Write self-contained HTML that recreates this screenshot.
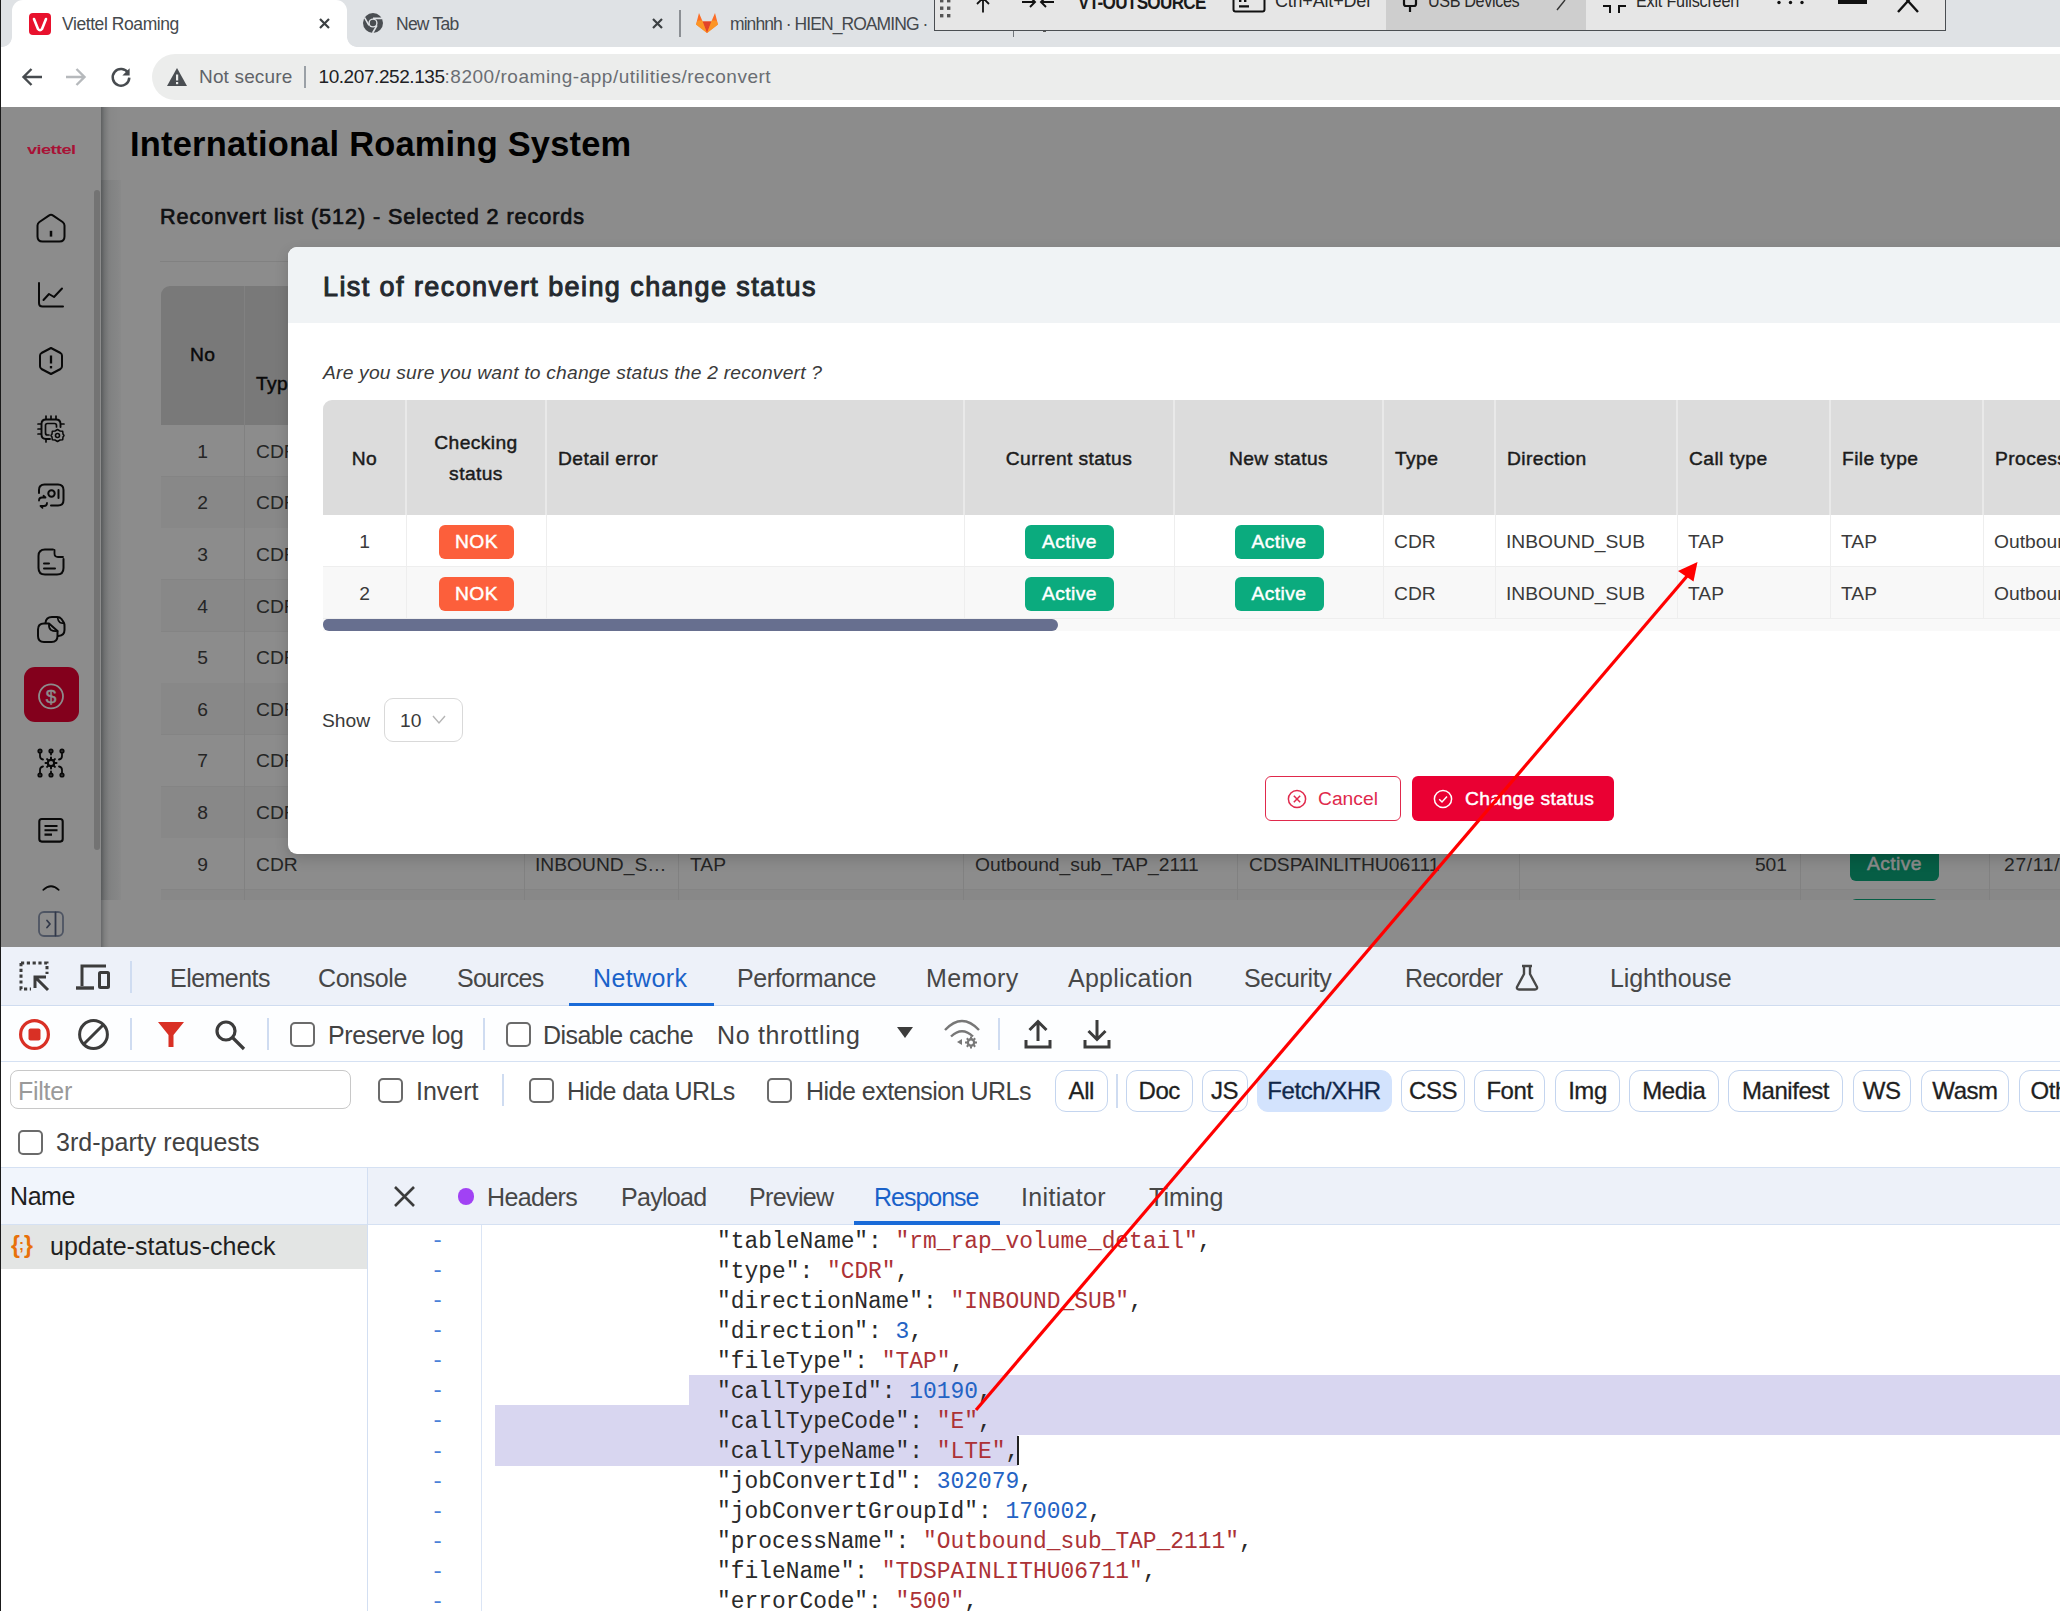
<!DOCTYPE html>
<html lang="en">
<head>
<meta charset="utf-8">
<title>Viettel Roaming</title>
<style>
*{box-sizing:border-box;margin:0;padding:0}
html,body{width:2060px;height:1611px;overflow:hidden;background:#fff}
body{position:relative;font-family:"Liberation Sans",sans-serif;color:#222}
.abs{position:absolute}
.t{position:absolute;white-space:nowrap;line-height:1}
/* ---------- browser chrome ---------- */
#tabstrip{left:0;top:0;width:2060px;height:47px;background:#dfe2e5}
#tab1{left:12px;top:0;width:335px;height:47px;background:#fff;border-radius:11px 11px 0 0}
#toolbar{left:0;top:47px;width:2060px;height:59px;background:#fff}
#omni{left:152px;top:53.5px;width:1960px;height:46.5px;background:#ecedec;border-radius:23px}
.ui{font-family:"Liberation Sans",sans-serif;color:#3f4347}
#leftedge{left:0;top:0;width:1px;height:1611px;background:#1a1a1a}
/* ---------- overlay bar ---------- */
#vbar{left:933.5px;top:-2px;width:1012.5px;height:32.6px;background:#e6e6e6;border:1.2px solid #4a4e52}
/* ---------- app ---------- */
#app{left:0;top:105px;width:2060px;height:842px;background:#fff;overflow:hidden}

/* app */
.m{-webkit-text-stroke:0.45px currentColor;letter-spacing:.4px}
#side{left:0;top:0;width:101px;height:842px;background:#fff}
#mask{left:0;top:0;width:2060px;height:842px;background:rgba(0,0,0,.45)}
.bt{font-size:19.25px;color:#444}
.bgrow{left:161px;width:1900px;height:52px}
.vline{width:1px;background:#ebebeb}
#modal{left:288px;top:142px;width:1800px;height:607px;background:#fff;border-radius:9px;overflow:hidden;box-shadow:0 5px 14px rgba(0,0,0,.16)}
#mhead{left:0;top:0;width:1800px;height:76px;background:#f0f3f5}
.th{position:absolute;top:0;height:115px;background:#dcdcdc;padding-top:1px;font-size:19.25px;color:#1b1b1b;display:flex;align-items:center;line-height:31px}
.td{position:absolute;height:52px;border-bottom:1px solid #eee;font-size:19.25px;color:#3a3a3a;display:flex;align-items:center;padding-left:11px;padding-top:2px;white-space:nowrap}
.badge{position:absolute;height:34px;border-radius:6px;color:#fff;font-size:19.25px;display:flex;align-items:center;justify-content:center}
.ok{background:#0bab7e;width:89px}
.nok{background:#fc5f3b;width:75px}
/* ---------- devtools ---------- */
#dt{left:0;top:947px;width:2060px;height:664px;background:#fff;overflow:hidden}

.dt{font-size:25px;color:#424242;letter-spacing:-0.2px;margin-top:.8px}
.cb{position:absolute;width:25px;height:25px;border:2px solid #6b6b6b;border-radius:5px;background:#fff}
.sep{position:absolute;width:2px;background:#cfdcf1}
.pill{position:absolute;top:123px;height:42px;border:1.5px solid #c4d5ef;border-radius:11px;font-size:24px;color:#1f1f1f;display:flex;align-items:center;justify-content:center;letter-spacing:-0.45px;-webkit-text-stroke:.3px #1f1f1f;background:#fff}
.code{position:absolute;left:717px;font-family:"Liberation Mono",monospace;font-size:22.9px;line-height:30px;white-space:pre;color:#2a2a2a;transform:scaleY(1.06);transform-origin:0 50%;margin-top:1.5px}
.s{color:#ac3236}.n{color:#2463c4}
.dash{position:absolute;left:431px;font-family:"Liberation Mono",monospace;font-size:22px;color:#4a80d8;line-height:30px;margin-top:2px}
</style>
</head>
<body>
<!-- browser chrome -->
<div id="tabstrip" class="abs"></div>
<div id="tab1" class="abs"></div>
<div id="toolbar" class="abs"></div>
<div id="omni" class="abs"></div>

<div class="abs" style="left:347px;top:37px;width:10px;height:10px;background:radial-gradient(circle at 100% 0,#dfe2e5 9.5px,#fff 10.2px)"></div>
<div class="abs" style="left:2px;top:37px;width:10px;height:10px;background:radial-gradient(circle at 0 0,#dfe2e5 9.5px,#fff 10.2px)"></div>
<!-- tab 1 -->
<div class="abs" style="left:29px;top:13px;width:22px;height:22px;background:#e8112d;border-radius:4px"></div>
<svg class="abs" style="left:29px;top:13px" width="22" height="22" viewBox="0 0 22 22"><path d="M5 6 L9 16 Q11 18.5 13 16 L17 6" fill="none" stroke="#fff" stroke-width="2.6" stroke-linecap="round" stroke-linejoin="round"/></svg>
<div id="ct1" class="t ui" style="left:62px;top:15.5px;font-size:17.5px;letter-spacing:-0.42px;color:#45494d">Viettel Roaming</div>
<svg class="abs" style="left:318px;top:17px" width="13" height="13" viewBox="0 0 13 13"><path d="M2 2 L11 11 M11 2 L2 11" stroke="#3c4043" stroke-width="2.2" fill="none"/></svg>
<!-- tab 2 -->
<svg class="abs" style="left:362px;top:12px" width="22" height="22" viewBox="0 0 22 22"><circle cx="11" cy="11" r="10" fill="#4a4e52"/><circle cx="11" cy="11" r="4.6" fill="#dfe2e5"/><circle cx="11" cy="11" r="3.2" fill="#4a4e52"/><path d="M11 6.4 H20 M7 13.3 L2.6 5.6 M15 13.3 L10.6 21" stroke="#dfe2e5" stroke-width="1.6"/></svg>
<div id="ct2" class="t ui" style="left:396px;top:15.5px;font-size:17.5px;letter-spacing:-0.75px;color:#45494d">New Tab</div>
<svg class="abs" style="left:651px;top:17px" width="13" height="13" viewBox="0 0 13 13"><path d="M2 2 L11 11 M11 2 L2 11" stroke="#3c4043" stroke-width="2.2" fill="none"/></svg>
<div class="abs" style="left:679px;top:10px;width:2px;height:27px;background:#8b8f94"></div>
<!-- tab 3 -->
<svg class="abs" style="left:695px;top:11px" width="24" height="23" viewBox="0 0 24 23"><path d="M12 22 L1 13.5 L4 2 L7.6 10.5 H16.4 L20 2 L23 13.5 Z" fill="#fc6d26"/><path d="M12 22 L7.6 10.5 H16.4 Z" fill="#e24329"/><path d="M12 22 L1 13.5 L2.6 9.5 H7.3 Z M12 22 L23 13.5 L21.4 9.5 H16.7 Z" fill="#fca326" opacity=".75"/></svg>
<div id="ct3" class="t ui" style="left:730px;top:15.5px;font-size:17.5px;letter-spacing:-0.93px;color:#45494d">minhnh · HIEN_ROAMING ·</div>
<div class="abs" style="left:1013px;top:30px;width:1px;height:7px;background:#70757a"></div>
<div class="abs" style="left:1043px;top:30px;width:3px;height:2px;background:#555"></div>
<!-- toolbar icons -->
<svg class="abs" style="left:20px;top:66px" width="24" height="22" viewBox="0 0 24 22"><path d="M22 11 H4 M11.5 3 L3.5 11 L11.5 19" fill="none" stroke="#474b4f" stroke-width="2.4"/></svg>
<svg class="abs" style="left:64px;top:66px" width="24" height="22" viewBox="0 0 24 22"><path d="M2 11 H20 M12.5 3 L20.5 11 L12.5 19" fill="none" stroke="#b6b9bc" stroke-width="2.4"/></svg>
<svg class="abs" style="left:109px;top:65px" width="24" height="24" viewBox="0 0 24 24"><path d="M19.2 8.2 A8.3 8.3 0 1 0 20.3 12.6" fill="none" stroke="#474b4f" stroke-width="2.5"/><path d="M20.6 3.2 V10.4 H13.4 Z" fill="#474b4f"/></svg>
<svg class="abs" style="left:166px;top:67px" width="22" height="20" viewBox="0 0 22 20"><path d="M11 1 L21 19 H1 Z" fill="#4a4e52"/><rect x="10" y="7.5" width="2.2" height="6" fill="#ecedec"/><rect x="10" y="15" width="2.2" height="2.2" fill="#ecedec"/></svg>
<div id="ns" class="t ui" style="left:199px;top:67px;font-size:19px;letter-spacing:0.16px;color:#5f6368">Not secure</div>
<div class="abs" style="left:304px;top:66px;width:2px;height:22px;background:#9aa0a6"></div>
<div id="url" class="t ui" style="left:318.5px;top:67px;font-size:19px;color:#202124"><span id="urlh" style="letter-spacing:-0.43px">10.207.252.135</span><span id="urlp" style="color:#6a6e73;letter-spacing:0.52px">:8200/roaming-app/utilities/reconvert</span></div>

<!-- app -->
<div id="app" class="abs">
<div id="side" class="abs"></div>
<div class="abs" style="left:94px;top:85px;width:6px;height:660px;background:#d2d2d2;border-radius:3px"></div>
<div class="abs" style="left:101px;top:0;width:8px;height:842px;background:linear-gradient(90deg,rgba(30,40,45,.30),rgba(30,40,45,.10) 45%,rgba(0,0,0,0) 100%)"></div><div class="abs" style="left:101px;top:0;width:20px;height:795px;background:linear-gradient(90deg,rgba(40,50,55,.10),rgba(40,50,55,.03) 50%,rgba(0,0,0,0) 100%)"></div>
<div class="abs" style="left:101px;top:75px;width:20px;height:720px;background:linear-gradient(90deg,rgba(60,75,80,.10),rgba(60,75,80,.03))"></div>
<div class="t" style="left:130px;top:21.8px;font-size:34.4px;font-weight:bold;color:#000;letter-spacing:0.23px" id="ttl">International Roaming System</div>
<div class="t m" style="left:160px;top:101px;font-size:21.6px;color:#1c2024;-webkit-text-stroke:0.7px #1c2024;letter-spacing:0.94px" id="sub">Reconvert list (512) - Selected 2 records</div>
<div class="abs" style="left:160px;top:156px;width:1900px;height:1px;background:#ececec"></div>
<div class="abs" style="left:161px;top:181px;width:1900px;height:139px;background:#dcdcdc;border-radius:9px 0 0 0"></div>
<div class="t m" style="left:190px;top:240px;font-size:19.25px;color:#111">No</div>
<div class="t m" style="left:256px;top:269px;font-size:19.25px;color:#111">Type</div>
<div class="abs bgrow" style="top:320.0px;background:#fff;border-bottom:1px solid #f0f0f0"></div>
<div class="t bt" style="left:161px;width:83px;text-align:center;top:336.5px">1</div>
<div class="t bt" style="left:256px;top:336.5px">CDR</div>
<div class="abs bgrow" style="top:371.6px;background:#f8f8f8;border-bottom:1px solid #f0f0f0"></div>
<div class="t bt" style="left:161px;width:83px;text-align:center;top:388.1px">2</div>
<div class="t bt" style="left:256px;top:388.1px">CDR</div>
<div class="abs bgrow" style="top:423.3px;background:#fff;border-bottom:1px solid #f0f0f0"></div>
<div class="t bt" style="left:161px;width:83px;text-align:center;top:439.8px">3</div>
<div class="t bt" style="left:256px;top:439.8px">CDR</div>
<div class="abs bgrow" style="top:475.0px;background:#f8f8f8;border-bottom:1px solid #f0f0f0"></div>
<div class="t bt" style="left:161px;width:83px;text-align:center;top:491.5px">4</div>
<div class="t bt" style="left:256px;top:491.5px">CDR</div>
<div class="abs bgrow" style="top:526.6px;background:#fff;border-bottom:1px solid #f0f0f0"></div>
<div class="t bt" style="left:161px;width:83px;text-align:center;top:543.1px">5</div>
<div class="t bt" style="left:256px;top:543.1px">CDR</div>
<div class="abs bgrow" style="top:578.2px;background:#f8f8f8;border-bottom:1px solid #f0f0f0"></div>
<div class="t bt" style="left:161px;width:83px;text-align:center;top:594.8px">6</div>
<div class="t bt" style="left:256px;top:594.8px">CDR</div>
<div class="abs bgrow" style="top:629.9px;background:#fff;border-bottom:1px solid #f0f0f0"></div>
<div class="t bt" style="left:161px;width:83px;text-align:center;top:646.4px">7</div>
<div class="t bt" style="left:256px;top:646.4px">CDR</div>
<div class="abs bgrow" style="top:681.5px;background:#f8f8f8;border-bottom:1px solid #f0f0f0"></div>
<div class="t bt" style="left:161px;width:83px;text-align:center;top:698.0px">8</div>
<div class="t bt" style="left:256px;top:698.0px">CDR</div>
<div class="abs bgrow" style="top:733.2px;background:#fff;border-bottom:1px solid #f0f0f0"></div>
<div class="t bt" style="left:161px;width:83px;text-align:center;top:749.7px">9</div>
<div class="t bt" style="left:256px;top:749.7px">CDR</div>
<div class="abs bgrow" style="top:784.8px;background:#f8f8f8;border-bottom:1px solid #f0f0f0"></div>
<div class="t bt" style="left:535px;top:749.7px">INBOUND_S…</div>
<div class="t bt" style="left:690px;top:749.7px">TAP</div>
<div class="t bt" style="left:975px;top:749.7px">Outbound_sub_TAP_2111</div>
<div class="t bt" style="left:1249px;top:749.7px">CDSPAINLITHU06111</div>
<div class="t bt" style="left:1687px;width:100px;text-align:right;top:749.7px">501</div>
<div class="t bt" style="left:2004px;top:749.7px;letter-spacing:.7px">27/11/2024</div>
<div class="badge ok m" style="left:1850px;top:742px">Active</div>
<div class="badge ok m" style="left:1850px;top:793.5px">Active</div>
<div class="abs vline" style="left:244px;top:181px;height:614px"></div>
<div class="abs vline" style="left:524px;top:181px;height:614px"></div>
<div class="abs vline" style="left:678px;top:181px;height:614px"></div>
<div class="abs vline" style="left:963px;top:181px;height:614px"></div>
<div class="abs vline" style="left:1237px;top:181px;height:614px"></div>
<div class="abs vline" style="left:1519px;top:181px;height:614px"></div>
<div class="abs vline" style="left:1800px;top:181px;height:614px"></div>
<div class="abs vline" style="left:1989px;top:181px;height:614px"></div>
<div class="abs" style="left:121px;top:795px;width:1940px;height:60px;background:#fff"></div>

<svg class="abs" style="left:36.0px;top:107.5px" width="30" height="30" viewBox="0 0 30 30" fill="none" stroke="#111" stroke-width="2" stroke-linecap="round" stroke-linejoin="round" ><path d="M12.8 2.6 Q15 1.1 17.2 2.6 L26.6 9 Q28.5 10.4 28.5 12.6 V23.5 Q28.5 28.5 23.5 28.5 H6.5 Q1.5 28.5 1.5 23.5 V12.6 Q1.5 10.4 3.4 9 Z"/><path d="M15 17.8 V23.6" stroke-width="2.5" stroke-linecap="butt"/></svg>
<svg class="abs" style="left:36.0px;top:174.0px" width="30" height="30" viewBox="0 0 30 30" fill="none" stroke="#111" stroke-width="2" stroke-linecap="round" stroke-linejoin="round" ><path d="M3 4 V24 Q3 27.5 6.5 27.5 H27"/><path d="M7.5 21 L13 15 L18 18 L26 9.5"/></svg>
<svg class="abs" style="left:36.0px;top:241.0px" width="30" height="30" viewBox="0 0 30 30" fill="none" stroke="#111" stroke-width="2" stroke-linecap="round" stroke-linejoin="round" ><path d="M15 2 L24.5 7 Q26 8 26 9.8 V20.2 Q26 22 24.5 23 L15 28 L5.5 23 Q4 22 4 20.2 V9.8 Q4 8 5.5 7 Z"/><path d="M15 9.5 V17.5" stroke-width="2.3" stroke-linecap="butt"/><path d="M15 20 V22.4" stroke-width="2.3" stroke-linecap="butt"/></svg>
<svg class="abs" style="left:36.0px;top:309.0px" width="30" height="30" viewBox="0 0 30 30" fill="none" stroke="#111" stroke-width="2" stroke-linecap="round" stroke-linejoin="round" ><path d="M14 25 H10 Q5.5 25 5.5 20.5 V10 Q5.5 5.5 10 5.5 H20 Q24.5 5.5 24.5 10 V13" stroke-width="1.9"/><path d="M13 21 H11.5 Q9.5 21 9.5 19 V11.5 Q9.5 9.5 11.5 9.5 H18.5 Q20.5 9.5 20.5 11.5 V13" stroke-width="1.7"/><path d="M10 2 V5 M15 2 V5 M20 2 V5 M2 10 H5 M2 15 H5 M2 20 H5 M25 10 H28 M10 25.5 V28" stroke-width="1.7"/><circle cx="21.5" cy="21.5" r="2" stroke-width="1.6"/><path d="M21.5 15.5 L24 17 L26.7 17.3 L27 20 L28 21.5 L27 23 L26.7 25.7 L24 26 L21.5 27.5 L19 26 L16.3 25.7 L16 23 L15 21.5 L16 20 L16.3 17.3 L19 17 Z" stroke-width="1.5"/></svg>
<svg class="abs" style="left:36.0px;top:376.0px" width="30" height="30" viewBox="0 0 30 30" fill="none" stroke="#111" stroke-width="2" stroke-linecap="round" stroke-linejoin="round" ><path d="M3 12 V9 Q3 3.5 8.5 3.5 H22 Q27.5 3.5 27.5 9 V19 Q27.5 24.5 22 24.5 H15"/><circle cx="15.5" cy="12.5" r="3.2"/><path d="M22.5 9 V17"/><path d="M3 19.5 Q3 16.5 6 16.5 H9.5 L7.5 14.8 M11 22 Q11 25 8 25 H4.5 L6.5 26.8" stroke-width="1.8"/></svg>
<svg class="abs" style="left:36.0px;top:442.0px" width="30" height="30" viewBox="0 0 30 30" fill="none" stroke="#111" stroke-width="2" stroke-linecap="round" stroke-linejoin="round" ><path d="M17 2.5 H9 Q2.5 2.5 2.5 9 V21 Q2.5 27.5 9 27.5 H21 Q27.5 27.5 27.5 21 V12"/><path d="M18.5 3 V6.5 Q18.5 10 22 10 H27" stroke-width="1.8"/><path d="M8 16.5 H13 M8 21.5 H19"/></svg>
<svg class="abs" style="left:36.0px;top:509.0px" width="30" height="30" viewBox="0 0 30 30" fill="none" stroke="#111" stroke-width="2" stroke-linecap="round" stroke-linejoin="round" ><path d="M9.5 9 Q10 3 16 3 H21 Q24 3 25.5 5 L27.5 8 Q28.5 9.5 28.5 12 V16 Q28.5 21.5 22.5 22"/><path d="M21.5 3.5 Q22 7 24 8.5 Q26 9.5 28 9" stroke-width="1.7"/><path d="M2 15.5 Q2 9.5 8 9.5 H13 L21.5 17 V22 Q21.5 28 15.5 28 H8 Q2 28 2 22 Z"/><path d="M13 10 Q12.5 14 15 16 Q17.5 17.5 21.5 17" stroke-width="1.7"/></svg>
<svg class="abs" style="left:36.0px;top:643.0px" width="30" height="30" viewBox="0 0 30 30" fill="none" stroke="#111" stroke-width="2" stroke-linecap="round" stroke-linejoin="round" ><circle cx="15" cy="15" r="3.2" stroke-width="2.2"/><path d="M15 9.5 V11 M15 19 V20.5 M9.5 15 H11 M19 15 H20.5 M11.1 11.1 L12.2 12.2 M17.8 17.8 L18.9 18.9 M18.9 11.1 L17.8 12.2 M12.2 17.8 L11.1 18.9" stroke-width="2"/><circle cx="4" cy="3" r="1.6"/><circle cx="15" cy="3" r="1.6"/><circle cx="26" cy="3" r="1.6"/><circle cx="4" cy="27" r="1.6"/><circle cx="15" cy="27" r="1.6"/><circle cx="26" cy="27" r="1.6"/><path d="M4 5 V8 Q4 11 7 11.5 M26 5 V8 Q26 11 23 11.5 M4 25 V22 Q4 19 7 18.5 M26 25 V22 Q26 19 23 18.5 M15 5 V6.5 M15 25 V23.5" stroke-width="1.8"/></svg>
<svg class="abs" style="left:36.0px;top:710.0px" width="30" height="30" viewBox="0 0 30 30" fill="none" stroke="#111" stroke-width="2" stroke-linecap="round" stroke-linejoin="round" ><rect x="3.3" y="4" width="23.4" height="22.6" rx="2.5" stroke-width="2.1"/><path d="M8.5 11 H21.5 M8.5 15.3 H21.5 M8.5 19.6 H16" stroke-width="2.1" stroke-linecap="butt"/></svg>
<svg class="abs" style="left:36.0px;top:773.0px" width="30" height="30" viewBox="0 0 30 30" fill="none" stroke="#111" stroke-width="2" stroke-linecap="round" stroke-linejoin="round" ><path d="M7.3 11.9 Q15 4.6 22.7 11.9" stroke-width="1.7"/></svg>
<svg class="abs" style="left:37px;top:805px" width="28" height="28" viewBox="0 0 28 28" fill="none" stroke="#8f9bb5" stroke-width="1.8" stroke-linecap="round" stroke-linejoin="round"><rect x="2" y="2" width="24" height="24" rx="5"/><path d="M18.5 2.5 V25.5" stroke="#5a6785"/><path d="M10 10.5 L13 14 L10 17.5" stroke="#5a6785"/></svg>
<div class="abs" style="left:24px;top:562px;width:55px;height:55px;border-radius:11px;background:#ee0033"></div><svg class="abs" style="left:36px;top:576px" width="30" height="30" viewBox="0 0 30 30" fill="none" stroke="#fff" stroke-width="1.8"><circle cx="15" cy="15.3" r="12"/></svg><div class="t" style="left:36px;width:30px;text-align:center;top:582px;font-size:19px;color:#fff;-webkit-text-stroke:.4px #fff">$</div>
<div id="mask" class="abs"></div>
<div class="t" id="logo" style="left:26.5px;top:35.5px;font-size:16.5px;font-weight:bold;letter-spacing:-0.5px;color:#a81236;transform:scale(1.1,.78);transform-origin:0 50%">viettel</div>
<!--ACTIVEICON-->
<div id="modal" class="abs">
<div id="mhead" class="abs"></div>
<div class="t" style="left:35px;top:27px;font-size:27px;font-weight:normal;color:#24292e;letter-spacing:1.42px;-webkit-text-stroke:1px #24292e" id="mt">List of reconvert being change status</div>
<div class="t" style="left:35px;top:116px;font-size:19.25px;font-style:italic;color:#3a3a3a;letter-spacing:0.2px" id="mq">Are you sure you want to change status the 2 reconvert ?</div>
<div class="abs" style="left:35px;top:153px;width:1800px;height:232px;border-radius:9px 0 0 0;overflow:hidden">
<div class="th m" style="left:0px;width:83px;justify-content:center;text-align:center"><span>No</span></div>
<div class="th m" style="left:83px;width:140px;justify-content:center;text-align:center"><span>Checking<br>status</span></div>
<div class="th m" style="left:223px;width:418px;padding-left:12px"><span>Detail error</span></div>
<div class="th m" style="left:641px;width:210px;justify-content:center;text-align:center"><span>Current status</span></div>
<div class="th m" style="left:851px;width:209px;justify-content:center;text-align:center"><span>New status</span></div>
<div class="th m" style="left:1060px;width:112px;padding-left:12px"><span>Type</span></div>
<div class="th m" style="left:1172px;width:182px;padding-left:12px"><span>Direction</span></div>
<div class="th m" style="left:1354px;width:153px;padding-left:12px"><span>Call type</span></div>
<div class="th m" style="left:1507px;width:153px;padding-left:12px"><span>File type</span></div>
<div class="th m" style="left:1660px;width:217px;padding-left:12px"><span>Process name</span></div>
<div class="abs" style="left:0;top:115px;width:1800px;height:52px;background:#fff"></div>
<div class="td" style="left:0px;top:115px;width:83px"></div>
<div class="td" style="left:83px;top:115px;width:140px"></div>
<div class="td" style="left:223px;top:115px;width:418px"></div>
<div class="td" style="left:641px;top:115px;width:210px"></div>
<div class="td" style="left:851px;top:115px;width:209px"></div>
<div class="td" style="left:1060px;top:115px;width:112px">CDR</div>
<div class="td" style="left:1172px;top:115px;width:182px">INBOUND_SUB</div>
<div class="td" style="left:1354px;top:115px;width:153px">TAP</div>
<div class="td" style="left:1507px;top:115px;width:153px">TAP</div>
<div class="td" style="left:1660px;top:115px;width:217px">Outbound_sub_TAP_2111</div>
<div class="t" style="left:0;width:83px;text-align:center;top:131.5px;font-size:19.25px;color:#3a3a3a">1</div>
<div class="badge nok m" style="left:116px;top:124.5px">NOK</div>
<div class="badge ok m" style="left:702px;top:124.5px">Active</div>
<div class="badge ok m" style="left:911.5px;top:124.5px">Active</div>
<div class="abs" style="left:0;top:167px;width:1800px;height:52px;background:#f8f8f8"></div>
<div class="td" style="left:0px;top:167px;width:83px"></div>
<div class="td" style="left:83px;top:167px;width:140px"></div>
<div class="td" style="left:223px;top:167px;width:418px"></div>
<div class="td" style="left:641px;top:167px;width:210px"></div>
<div class="td" style="left:851px;top:167px;width:209px"></div>
<div class="td" style="left:1060px;top:167px;width:112px">CDR</div>
<div class="td" style="left:1172px;top:167px;width:182px">INBOUND_SUB</div>
<div class="td" style="left:1354px;top:167px;width:153px">TAP</div>
<div class="td" style="left:1507px;top:167px;width:153px">TAP</div>
<div class="td" style="left:1660px;top:167px;width:217px">Outbound_sub_TAP_2111</div>
<div class="t" style="left:0;width:83px;text-align:center;top:183.5px;font-size:19.25px;color:#3a3a3a">2</div>
<div class="badge nok m" style="left:116px;top:176.5px">NOK</div>
<div class="badge ok m" style="left:702px;top:176.5px">Active</div>
<div class="badge ok m" style="left:911.5px;top:176.5px">Active</div>
<div class="abs" style="left:82.4px;top:0;width:2px;height:115px;background:#e9e9e9"></div><div class="abs" style="left:83px;top:115px;width:1px;height:104px;background:#eee"></div><div class="abs" style="left:222.4px;top:0;width:2px;height:115px;background:#e9e9e9"></div><div class="abs" style="left:223px;top:115px;width:1px;height:104px;background:#eee"></div><div class="abs" style="left:640.4px;top:0;width:2px;height:115px;background:#e9e9e9"></div><div class="abs" style="left:641px;top:115px;width:1px;height:104px;background:#eee"></div><div class="abs" style="left:850.4px;top:0;width:2px;height:115px;background:#e9e9e9"></div><div class="abs" style="left:851px;top:115px;width:1px;height:104px;background:#eee"></div><div class="abs" style="left:1059.4px;top:0;width:2px;height:115px;background:#e9e9e9"></div><div class="abs" style="left:1060px;top:115px;width:1px;height:104px;background:#eee"></div><div class="abs" style="left:1171.4px;top:0;width:2px;height:115px;background:#e9e9e9"></div><div class="abs" style="left:1172px;top:115px;width:1px;height:104px;background:#eee"></div><div class="abs" style="left:1353.4px;top:0;width:2px;height:115px;background:#e9e9e9"></div><div class="abs" style="left:1354px;top:115px;width:1px;height:104px;background:#eee"></div><div class="abs" style="left:1506.4px;top:0;width:2px;height:115px;background:#e9e9e9"></div><div class="abs" style="left:1507px;top:115px;width:1px;height:104px;background:#eee"></div><div class="abs" style="left:1659.4px;top:0;width:2px;height:115px;background:#e9e9e9"></div><div class="abs" style="left:1660px;top:115px;width:1px;height:104px;background:#eee"></div>
<div class="abs" style="left:0;top:219px;width:1800px;height:12px;background:#f9f9f9"></div>
<div class="abs" style="left:0;top:219px;width:735px;height:12px;background:#676f8f;border-radius:5px 6px 6px 6px"></div>
</div>
<div class="t" style="left:34px;top:464px;font-size:19.25px;color:#3a3a3a">Show</div>
<div class="abs" style="left:96px;top:451px;width:79px;height:44px;border:1px solid #d9d9d9;border-radius:9px;background:#fff"></div>
<div class="t" style="left:112px;top:464px;font-size:19.25px;color:#3a3a3a">10</div>
<svg class="abs" style="left:143px;top:467px" width="16" height="12" viewBox="0 0 16 12"><path d="M2 2 L8 9 L14 2" fill="none" stroke="#b5b5b5" stroke-width="1.4"/></svg>
<div class="abs" style="left:977px;top:529px;width:136px;height:45px;border:1.5px solid #e0294c;border-radius:6px;background:#fff"></div>
<svg class="abs" style="left:999px;top:542px" width="20" height="20" viewBox="0 0 20 20"><circle cx="10" cy="10" r="8.6" fill="none" stroke="#e0294c" stroke-width="1.5"/><path d="M6.8 6.8 L13.2 13.2 M13.2 6.8 L6.8 13.2" stroke="#e0294c" stroke-width="1.5"/></svg>
<div class="t" style="left:1030px;top:542px;font-size:19.25px;color:#e0294c">Cancel</div>
<div class="abs" style="left:1124px;top:529px;width:202px;height:45px;border-radius:6px;background:#ea0033"></div>
<svg class="abs" style="left:1145px;top:542px" width="20" height="20" viewBox="0 0 20 20"><circle cx="10" cy="10" r="8.6" fill="none" stroke="#fff" stroke-width="1.5"/><path d="M6.2 10.2 L9 13 L14 7.4" stroke="#fff" stroke-width="1.5" fill="none"/></svg>
<div class="t m" style="left:1177px;top:542px;font-size:19.25px;color:#fff">Change status</div>
</div>
</div>
<div class="abs" style="left:0;top:105px;width:2060px;height:2px;background:#fff"></div>
<!-- devtools -->
<div id="dt" class="abs">
<div class="abs" style="left:0;top:0;width:2060px;height:59px;background:#edf1f9;border-bottom:1.5px solid #cfdcf0"></div>
<svg class="abs" style="left:18px;top:13px" width="34" height="34" viewBox="0 0 34 34" fill="none" stroke="#3c3c3c"><path d="M3 3 H29 V14 M3 3 V29 H13" stroke-width="3" stroke-dasharray="3.2 2.6"/><path d="M17 17 L30 30 M17 28 V17 H28" stroke-width="3"/></svg>
<svg class="abs" style="left:75px;top:15px" width="38" height="32" viewBox="0 0 38 32" fill="none" stroke="#3c3c3c" stroke-width="3"><path d="M7 24 V4 H31"/><path d="M1 26 H19" stroke-width="3.4"/><rect x="24.5" y="10.5" width="9" height="15" rx="1"/></svg>
<div class="sep" style="left:130px;top:14px;height:32px"></div>
<div class="t dt" id="dtab0" style="left:170px;top:18px;color:#474747;letter-spacing:-0.53px">Elements</div>
<div class="t dt" id="dtab1" style="left:318px;top:18px;color:#474747;letter-spacing:-0.39px">Console</div>
<div class="t dt" id="dtab2" style="left:457px;top:18px;color:#474747;letter-spacing:-0.74px">Sources</div>
<div class="t dt" id="dtab3" style="left:593px;top:18px;color:#1a62c9;letter-spacing:0.4px">Network</div>
<div class="t dt" id="dtab4" style="left:737px;top:18px;color:#474747;letter-spacing:-0.37px">Performance</div>
<div class="t dt" id="dtab5" style="left:926px;top:18px;color:#474747;letter-spacing:0.37px">Memory</div>
<div class="t dt" id="dtab6" style="left:1068px;top:18px;color:#474747;letter-spacing:0.24px">Application</div>
<div class="t dt" id="dtab7" style="left:1244px;top:18px;color:#474747;letter-spacing:-0.35px">Security</div>
<div class="t dt" id="dtab8" style="left:1405px;top:18px;color:#474747;letter-spacing:-0.67px">Recorder</div>
<div class="t dt" id="dtab9" style="left:1610px;top:18px;color:#474747;letter-spacing:-0.08px">Lighthouse</div>
<div class="abs" style="left:569px;top:55.5px;width:145px;height:3.5px;background:#1a6bd8"></div>
<svg class="abs" style="left:1514px;top:17px" width="26" height="28" viewBox="0 0 26 28" fill="none" stroke="#474747" stroke-width="2.4" stroke-linejoin="round"><path d="M8 2 H18 M10 2 V10 L3 23 Q2.5 25.5 5 25.5 H21 Q23.5 25.5 23 23 L16 10 V2"/></svg>
<div class="abs" style="left:0;top:59.5px;width:2060px;height:55px;background:#fdfeff;border-bottom:1.5px solid #d5e1f3"></div>
<svg class="abs" style="left:17px;top:70px" width="35" height="35" viewBox="0 0 35 35"><circle cx="17.5" cy="17.5" r="13.9" fill="none" stroke="#d93025" stroke-width="3.2"/><rect x="11.5" y="11.5" width="12" height="12" rx="2" fill="#d93025"/></svg>
<svg class="abs" style="left:76px;top:70px" width="35" height="35" viewBox="0 0 35 35" fill="none" stroke="#3c3c3c" stroke-width="3"><circle cx="17.5" cy="17.5" r="13.9"/><path d="M7.7 27.3 L27.3 7.7"/></svg>
<div class="sep" style="left:130px;top:71px;height:32px"></div>
<svg class="abs" style="left:157px;top:74px" width="28" height="27" viewBox="0 0 28 27"><path d="M1 1 H27 L16.5 14 V26 H11.5 V14 Z" fill="#d93025"/></svg>
<svg class="abs" style="left:213px;top:71px" width="34" height="34" viewBox="0 0 34 34" fill="none" stroke="#3c3c3c" stroke-width="3.2"><circle cx="13" cy="13" r="9"/><path d="M19.5 19.5 L31 31"/></svg>
<div class="sep" style="left:267px;top:71px;height:32px"></div>
<div class="cb" style="left:290px;top:75px"></div>
<div class="t dt" id="pl" style="left:328px;top:75px;letter-spacing:-0.4px">Preserve log</div>
<div class="sep" style="left:483px;top:71px;height:32px"></div>
<div class="cb" style="left:506px;top:75px"></div>
<div class="t dt" id="dc" style="left:543px;top:75px;letter-spacing:-0.54px">Disable cache</div>
<div class="t dt" id="nt" style="left:717px;top:75px;letter-spacing:0.67px">No throttling</div>
<svg class="abs" style="left:896px;top:79px" width="18" height="13" viewBox="0 0 18 13"><path d="M1 1 H17 L9 12 Z" fill="#3c3c3c"/></svg>
<svg class="abs" style="left:943px;top:70px" width="38" height="34" viewBox="0 0 38 34" fill="none" stroke="#777" stroke-width="2.4"><path d="M2 13 Q19 -5 36 13"/><path d="M8 19.5 Q19 9 30 19.5"/><path d="M14 25 L19 22 V28 Z" fill="#777" stroke="none"/><circle cx="28" cy="25.5" r="3.2"/><path d="M28 19.5 V21.5 M28 29.5 V31.5 M22 25.5 H24 M32 25.5 H34 M23.8 21.3 L25.2 22.7 M30.8 28.3 L32.2 29.7 M32.2 21.3 L30.8 22.7 M25.2 28.3 L23.8 29.7" stroke-width="2"/></svg>
<div class="sep" style="left:998px;top:71px;height:32px"></div>
<svg class="abs" style="left:1023px;top:71px" width="30" height="32" viewBox="0 0 30 32" fill="none" stroke="#3c3c3c" stroke-width="3"><path d="M15 23 V4 M6.5 12 L15 3.5 L23.5 12"/><path d="M3 22 V29 H27 V22"/></svg>
<svg class="abs" style="left:1082px;top:71px" width="30" height="32" viewBox="0 0 30 32" fill="none" stroke="#3c3c3c" stroke-width="3"><path d="M15 2 V21 M6.5 13 L15 21.5 L23.5 13"/><path d="M3 22 V29 H27 V22"/></svg>
<div class="abs" style="left:10px;top:122.5px;width:341px;height:39.5px;border:1.5px solid #c8c8c8;border-radius:8px;background:#fff"></div>
<div id="flt" class="t dt" style="left:18px;top:131px;color:#9a9a9a;letter-spacing:-0.26px">Filter</div>
<div class="cb" style="left:378px;top:131px"></div>
<div class="t dt" id="inv" style="left:416px;top:131px;letter-spacing:-0.0px">Invert</div>
<div class="sep" style="left:502px;top:127px;height:32px"></div>
<div class="cb" style="left:529px;top:131px"></div>
<div class="t dt" id="hd" style="left:567px;top:131px;letter-spacing:-0.64px">Hide data URLs</div>
<div class="cb" style="left:767px;top:131px"></div>
<div class="t dt" id="he" style="left:806px;top:131px;letter-spacing:-0.52px">Hide extension URLs</div>
<div class="pill" style="left:1055px;width:52.5px;">All</div>
<div class="pill" style="left:1126px;width:66.5px;">Doc</div>
<div class="pill" style="left:1201.5px;width:46.0px;">JS</div>
<div class="pill" style="left:1256.5px;width:135.0px;background:#d3e3fd;border-color:#d3e3fd;color:#0d2a57;">Fetch/XHR</div>
<div class="pill" style="left:1401px;width:64px;">CSS</div>
<div class="pill" style="left:1474px;width:71px;">Font</div>
<div class="pill" style="left:1555px;width:65px;">Img</div>
<div class="pill" style="left:1628.5px;width:90.5px;">Media</div>
<div class="pill" style="left:1728px;width:115px;">Manifest</div>
<div class="pill" style="left:1852.5px;width:58.5px;">WS</div>
<div class="pill" style="left:1921px;width:88px;">Wasm</div>
<div class="pill" style="left:2018.5px;width:81.5px;justify-content:flex-start;padding-left:11px;">Other</div>
<div class="sep" style="left:1116px;top:127px;height:34px"></div>
<div class="cb" style="left:18px;top:183px"></div>
<div class="t dt" id="tp" style="left:56px;top:183px;letter-spacing:0.03px;margin-top:0">3rd-party requests</div>
<div class="abs" style="left:0;top:219.5px;width:2060px;height:58.5px;background:#edf1f9;border-top:1.5px solid #d5e1f3;border-bottom:1.5px solid #d5e1f3"></div>
<div class="abs" style="left:0;top:221px;width:367px;height:56px;background:#f1f5fc"></div>
<div class="abs" style="left:366.6px;top:220px;width:1.2px;height:444px;background:#d3dff2"></div>
<div id="nm" class="t dt" style="left:10px;top:236px;color:#1f1f1f;letter-spacing:-0.42px">Name</div>
<svg class="abs" style="left:393px;top:238px" width="23" height="23" viewBox="0 0 23 23"><path d="M2 2 L21 21 M21 2 L2 21" stroke="#3c3c3c" stroke-width="2.6"/></svg>
<div class="abs" style="left:457.6px;top:241px;width:16.6px;height:16.6px;border-radius:8.3px;background:#a142f4"></div>
<div class="t dt" id="rt0" style="left:487px;top:237px;color:#474747;letter-spacing:-0.64px">Headers</div>
<div class="t dt" id="rt1" style="left:621px;top:237px;color:#474747;letter-spacing:-0.69px">Payload</div>
<div class="t dt" id="rt2" style="left:749px;top:237px;color:#474747;letter-spacing:-0.63px">Preview</div>
<div class="t dt" id="rt3" style="left:874px;top:237px;color:#1a62c9;letter-spacing:-1.01px">Response</div>
<div class="t dt" id="rt4" style="left:1021px;top:237px;color:#474747;letter-spacing:0.33px">Initiator</div>
<div class="t dt" id="rt5" style="left:1149px;top:237px;color:#474747;letter-spacing:0.07px">Timing</div>
<div class="abs" style="left:854px;top:274px;width:146px;height:3.5px;background:#1a6bd8"></div>
<div class="abs" style="left:0;top:278px;width:367px;height:43.5px;background:#e3e5e4"></div>
<div class="t" style="left:11px;top:287px;font-size:23px;font-weight:bold;color:#e8710a;letter-spacing:-1px">{<span style="font-size:15px;position:relative;top:-3px;letter-spacing:0">;</span>}</div>
<div class="t dt" id="usc" style="left:50px;top:287px;color:#1f1f1f;letter-spacing:0.02px;margin-top:0">update-status-check</div>
<div class="abs" style="left:481.2px;top:278px;width:1.2px;height:400px;background:#dbe5f5"></div>
<div class="abs" style="left:689px;top:428px;width:1400px;height:30px;background:#d8d6f0"></div>
<div class="abs" style="left:495px;top:458px;width:1600px;height:30px;background:#d8d6f0"></div>
<div class="abs" style="left:495px;top:488px;width:523px;height:30.5px;background:#d8d6f0"></div>
<div class="abs" style="left:1017px;top:489px;width:2px;height:29px;background:#222"></div>
<div class="code" id="c0" style="top:278.0px">"tableName": <span class="s">"rm_rap_volume_detail"</span>,</div>
<div class="dash" style="top:278.0px">-</div>
<div class="code" id="c1" style="top:308.08px">"type": <span class="s">"CDR"</span>,</div>
<div class="dash" style="top:308.08px">-</div>
<div class="code" id="c2" style="top:338.16px">"directionName": <span class="s">"INBOUND_SUB"</span>,</div>
<div class="dash" style="top:338.16px">-</div>
<div class="code" id="c3" style="top:368.24px">"direction": <span class="n">3</span>,</div>
<div class="dash" style="top:368.24px">-</div>
<div class="code" id="c4" style="top:398.32px">"fileType": <span class="s">"TAP"</span>,</div>
<div class="dash" style="top:398.32px">-</div>
<div class="code" id="c5" style="top:428.4px">"callTypeId": <span class="n">10190</span>,</div>
<div class="dash" style="top:428.4px">-</div>
<div class="code" id="c6" style="top:458.48px">"callTypeCode": <span class="s">"E"</span>,</div>
<div class="dash" style="top:458.48px">-</div>
<div class="code" id="c7" style="top:488.56px">"callTypeName": <span class="s">"LTE"</span>,</div>
<div class="dash" style="top:488.56px">-</div>
<div class="code" id="c8" style="top:518.64px">"jobConvertId": <span class="n">302079</span>,</div>
<div class="dash" style="top:518.64px">-</div>
<div class="code" id="c9" style="top:548.72px">"jobConvertGroupId": <span class="n">170002</span>,</div>
<div class="dash" style="top:548.72px">-</div>
<div class="code" id="c10" style="top:578.8px">"processName": <span class="s">"Outbound_sub_TAP_2111"</span>,</div>
<div class="dash" style="top:578.8px">-</div>
<div class="code" id="c11" style="top:608.88px">"fileName": <span class="s">"TDSPAINLITHU06711"</span>,</div>
<div class="dash" style="top:608.88px">-</div>
<div class="code" id="c12" style="top:638.96px">"errorCode": <span class="s">"500"</span>,</div>
<div class="dash" style="top:638.96px">-</div>
</div>

<div id="vbar" class="abs"></div>
<div class="abs" style="left:1386px;top:0;width:200px;height:29.6px;background:#cecece"></div>
<svg class="abs" style="left:938px;top:0" width="16" height="20" viewBox="0 0 16 20"><g fill="#555"><rect x="2" y="-1" width="3.4" height="3.4"/><rect x="9" y="-1" width="3.4" height="3.4"/><rect x="2" y="6.5" width="3.4" height="3.4"/><rect x="9" y="6.5" width="3.4" height="3.4"/><rect x="2" y="14" width="3.4" height="3.4"/><rect x="9" y="14" width="3.4" height="3.4"/></g></svg>
<svg class="abs" style="left:972px;top:0" width="22" height="14" viewBox="0 0 22 14"><path d="M11 12.5 V0 M5 4 L11 -2 L17 4" stroke="#111" stroke-width="1.8" fill="none"/></svg>
<svg class="abs" style="left:1020px;top:0" width="36" height="10" viewBox="0 0 36 10"><path d="M2 2 H15 M10 -3 L15 2 L10 7 M34 2 H21 M26 -3 L21 2 L26 7" stroke="#111" stroke-width="1.9" fill="none"/></svg>
<div id="vt" class="t" style="left:1078px;top:-7px;font-size:19.5px;font-weight:bold;letter-spacing:-0.81px;color:#1a1a1a;transform:scaleX(.88);transform-origin:0 0">VT-OUTSOURCE</div>
<svg class="abs" style="left:1232px;top:0" width="36" height="14" viewBox="0 0 36 14"><rect x="1.5" y="-10" width="31" height="21.5" rx="2" fill="none" stroke="#111" stroke-width="2"/><path d="M7 1 H9.4 M12 1 H14.4 M7 6.4 H17" stroke="#111" stroke-width="2.2"/></svg>
<div id="cad" class="t" style="left:1275px;top:-7.8px;font-size:18px;letter-spacing:-0.17px;color:#2a2a2a">Ctrl+Alt+Del</div>
<svg class="abs" style="left:1400px;top:0" width="20" height="14" viewBox="0 0 20 14"><rect x="4" y="-6" width="12" height="12" rx="2" fill="none" stroke="#111" stroke-width="2.2"/><path d="M10 6 V12" stroke="#111" stroke-width="2.2"/></svg>
<div id="usb" class="t" style="left:1428px;top:-7.8px;font-size:18px;letter-spacing:-0.42px;color:#2a2a2a;transform:scaleX(.9);transform-origin:0 0">USB Devices</div>
<svg class="abs" style="left:1554px;top:0" width="14" height="12" viewBox="0 0 14 12"><path d="M3 10 L11 0" stroke="#333" stroke-width="1.4" fill="none"/></svg>
<svg class="abs" style="left:1600px;top:0" width="30" height="14" viewBox="0 0 30 14"><path d="M3 6 H10 V13 M26 6 H19 V13" stroke="#111" stroke-width="2" fill="none"/></svg>
<div id="exf" class="t" style="left:1636px;top:-7.8px;font-size:18px;letter-spacing:-0.24px;color:#2a2a2a;transform:scaleX(.9);transform-origin:0 0">Exit Fullscreen</div>
<svg class="abs" style="left:1776px;top:0" width="30" height="6" viewBox="0 0 30 6"><circle cx="3" cy="2.5" r="1.7" fill="#111"/><circle cx="14.5" cy="2.5" r="1.7" fill="#111"/><circle cx="26" cy="2.5" r="1.7" fill="#111"/></svg>
<div class="abs" style="left:1838px;top:0;width:29px;height:4px;background:#111"></div>
<svg class="abs" style="left:1896px;top:0" width="24" height="14" viewBox="0 0 24 14"><path d="M2 12 L12 1 L22 12 M12 1 L9 -3 M12 1 L15 -3" stroke="#111" stroke-width="2.4" fill="none"/></svg>

<svg class="abs" style="left:0;top:0;pointer-events:none" width="2060" height="1611" viewBox="0 0 2060 1611"><path d="M976 1410 L1688 575" stroke="#ff0000" stroke-width="3.2" fill="none"/><path d="M1697.5 562 L1693.5 581.5 L1678 571 Z" fill="#ff0000"/></svg>
<div id="leftedge" class="abs"></div>
</body>
</html>
